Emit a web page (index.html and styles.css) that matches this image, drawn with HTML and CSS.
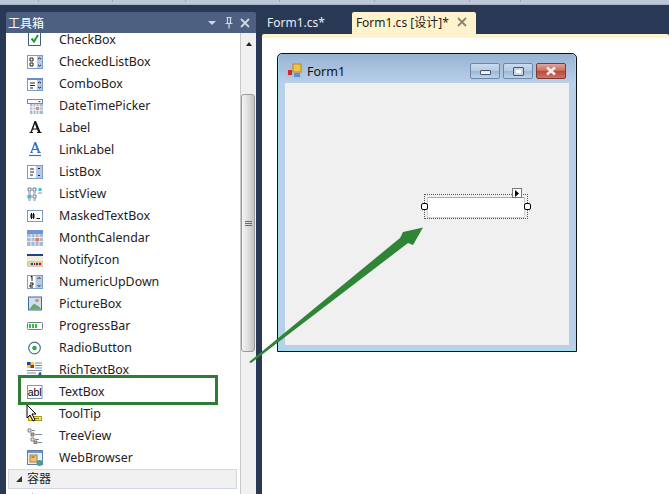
FILE: index.html
```html
<!DOCTYPE html>
<html lang="zh">
<head>
<meta charset="utf-8">
<title>Form1</title>
<link rel="stylesheet" href="styles.css">
</head>
<body>
<div class="topstrip"></div>
<div class="workspace">
  <aside class="toolbox">
    <header class="tb-title">
      <span class="tb-name">工具箱</span>
      <span class="tb-actions">
        <svg width="12" height="12" viewBox="0 0 12 12"><path d="M1 4h8L5 8z" fill="#cfd7e4"/></svg>
        <svg width="12" height="14" viewBox="0 0 12 14"><path d="M3.500 1.500h5M4.500 1.500v6M7.500 1.500v6M2.500 7.500h7M6 7.500v5" fill="none" stroke="#cfd7e4" stroke-width="1.200"/></svg>
        <svg width="12" height="12" viewBox="0 0 12 12"><path d="M2 2l8 8M10 2l-8 8" stroke="#cfd7e4" stroke-width="1.800"/></svg>
      </span>
    </header>
    <div class="tb-body">
      <div class="tb-list">
        <div class="row first"><svg class="ico" viewBox="0 0 16 16"><path d="M1.500 1v12.500h12V1" fill="#fff" stroke="#3b5f80"/><path d="M4.500 6.500l2.500 3L11 3" fill="none" stroke="#1f9a2c" stroke-width="2"/></svg><span>CheckBox</span></div>
        <div class="row"><svg class="ico" viewBox="0 0 16 16"><rect x=".5" y="1.500" width="15" height="13" fill="#fff" stroke="#7f9cc4"/><rect x="10" y="2" width="5" height="12" fill="#b5c9e6"/><path d="M3 4h3v3H3zM3 9h3v3H3z" fill="none" stroke="#222"/><path d="M11 5l1.500-1L14 5M11 11l1.500 1 1.500-1" fill="none" stroke="#222"/></svg><span>CheckedListBox</span></div>
        <div class="row"><svg class="ico" viewBox="0 0 16 16"><rect x=".5" y="2.500" width="15" height="12" fill="#fff" stroke="#7f9cc4"/><rect x="0" y="2" width="16" height="2" fill="#6b8dbd"/><rect x="10" y="4" width="5" height="10" fill="#b5c9e6"/><path d="M3 7h5M3 9.500h5M3 12h3" stroke="#222"/><path d="M11 7l1.500-1L14 7M11 11l1.500 1 1.500-1" fill="none" stroke="#222"/></svg><span>ComboBox</span></div>
        <div class="row"><svg class="ico" viewBox="0 0 16 16"><rect x=".5" y="1.500" width="15" height="4" fill="#fff" stroke="#6b8dbd"/><path d="M11 3h3l-1.500 1.500z" fill="#34588c"/><rect x="3" y="6" width="13" height="10" fill="#a9b9d2"/><path d="M6 6v10M9 6v10M12 6v10M3 9h13M3 12h13" stroke="#fff"/><rect x="9" y="9" width="3" height="3" fill="#e98a6c"/></svg><span>DateTimePicker</span></div>
        <div class="row"><svg class="ico" viewBox="0 0 16 16"><path d="M2.500 13h3.500v-1l-1 0 .8-2.500h4.400l.8 2.500-1 0v1h4.500v-1h-1L9 1H7.500L3.500 12h-1zM6.300 8.500L8 3.800 9.500 8.500z" fill="#111" fill-rule="evenodd"/></svg><span>Label</span></div>
        <div class="row"><svg class="ico" viewBox="0 0 16 16"><path d="M3 11h3v-.8l-1 0 .8-2.300h4.400l.8 2.300-1 0v.8h4v-.8h-1L9 0H7.500L3.700 10.200H3zM6.200 7L8 2.500 9.500 7z" fill="#2f74c0" fill-rule="evenodd"/><path d="M2 13.500h12" stroke="#2f74c0" stroke-width="1.200"/></svg><span>LinkLabel</span></div>
        <div class="row"><svg class="ico" viewBox="0 0 16 16"><rect x=".5" y="1.500" width="15" height="13" fill="#fff" stroke="#7f9cc4"/><rect x="9" y="2" width="6" height="12" fill="#b5c9e6"/><path d="M3 5h4M3 8h4M3 11h3" stroke="#222"/><path d="M11 5l1-1 1 1M11 11l1 1 1-1" fill="none" stroke="#222"/></svg><span>ListBox</span></div>
        <div class="row"><svg class="ico" viewBox="0 0 16 16"><path d="M1 2h3v3H1zM6 2h3v3H6zM1 9h3v3H1zM6 9h3v3H6z" fill="#fff" stroke="#47617f" stroke-width=".8"/><circle cx="13" cy="3.500" r="1.700" fill="#27c4cd"/><circle cx="2.500" cy="10.500" r="1.200" fill="#27c4cd"/><path d="M1 7h3M6 7h3M11 7h4M1 14h3M6 14h3" stroke="#7f8fa6"/></svg><span>ListView</span></div>
        <div class="row"><svg class="ico" viewBox="0 0 16 16"><rect x=".5" y="2.500" width="15" height="11" fill="#fff" stroke="#7f9cc4"/><path d="M4.500 5v6M6.500 5v6M3 7h5M3 9h5" stroke="#111"/><path d="M9.500 10.500h3.500" stroke="#111"/></svg><span>MaskedTextBox</span></div>
        <div class="row"><svg class="ico" viewBox="0 0 16 16"><rect x="0" y="0" width="16" height="16" fill="#a9b9d2"/><rect x="0" y="0" width="16" height="4" fill="#6f96d2"/><path d="M4 4v12M8 4v12M12 4v12M0 7.500h16M0 11.500h16" stroke="#e8edf5"/><rect x="8.500" y="8" width="3.500" height="3.500" fill="#e77a55"/></svg><span>MonthCalendar</span></div>
        <div class="row"><svg class="ico" viewBox="0 0 16 16"><rect x="0" y="2" width="16" height="2" fill="#1f3f8f"/><rect x="0" y="4" width="16" height="5" fill="#f0ecd8"/><rect x="0" y="9" width="16" height="6" fill="#d6cfae"/><path d="M4 11h2v2H4zM9 11h2v2H9z" fill="#1f3f8f"/><path d="M7 11h1v2H7zM12 11h2v2h-2z" fill="#c03"/></svg><span>NotifyIcon</span></div>
        <div class="row"><svg class="ico" viewBox="0 0 16 16"><rect x=".5" y="1.500" width="15" height="13" fill="#fff" stroke="#7f9cc4"/><rect x="8.500" y="2" width="6.500" height="12" fill="#b5c9e6"/><path d="M3.500 3l1.500-1v5M3 9h3v2H3v2h3" fill="none" stroke="#111"/><path d="M10.500 5l1.500-1.500L13.500 5M10.500 11l1.500 1.500 1.500-1.500" fill="none" stroke="#222"/></svg><span>NumericUpDown</span></div>
        <div class="row"><svg class="ico" viewBox="0 0 16 16"><rect x="1.500" y="1" width="13" height="13" fill="#cfe0f2" stroke="#3e6d9c"/><path d="M2 13.500l5-6 3 2 2 1 2.500 3z" fill="#6ea56a"/><circle cx="10" cy="4.500" r="1.800" fill="#e58a5a"/></svg><span>PictureBox</span></div>
        <div class="row"><svg class="ico" viewBox="0 0 16 16"><rect x=".5" y="4.500" width="15" height="7" rx="1" fill="#fff" stroke="#6e7d8c"/><path d="M2 6h2v4H2zM5 6h2v4H5zM8 6h2v4H8z" fill="#36c23a"/></svg><span>ProgressBar</span></div>
        <div class="row"><svg class="ico" viewBox="0 0 16 16"><circle cx="7.500" cy="8" r="5.800" fill="#fff" stroke="#4f7394" stroke-width="1.200"/><circle cx="7.500" cy="8" r="2.300" fill="#30a84c"/></svg><span>RadioButton</span></div>
        <div class="row"><svg class="ico" viewBox="0 0 16 16"><rect x="0" y="0" width="7" height="6" fill="#f0d020"/><rect x="0" y="0" width="3.500" height="3" fill="#1d36b8"/><rect x="3.500" y="3" width="3.500" height="3" fill="#c42020"/><path d="M8 1h7M8 3.500h7M8 6h7M0 8.500h15M0 11h9M0 13.500h7" stroke="#7c8ca6"/><path d="M10 15l2.500-5h1.500l1 5h-1.200l-.3-1.500h-1.500l-.8 1.500z" fill="#2f62b0"/></svg><span>RichTextBox</span></div>
        <div class="row"><svg class="ico" viewBox="0 0 16 16"><rect x=".5" y="1.500" width="14.500" height="13" fill="#fff" stroke="#7d98ba"/><text class="abl" x="7.700" y="11.500" text-anchor="middle">abl</text></svg><span>TextBox</span></div>
        <div class="row"><svg class="ico" viewBox="0 0 16 16"><rect x="1.500" y="10.500" width="13" height="4" fill="#f7ea3c" stroke="#a89a14"/><path d="M4 12.500h8" stroke="#8a7b10"/></svg><span>ToolTip</span></div>
        <div class="row"><svg class="ico" viewBox="0 0 16 16"><path d="M1 1h3v3H1zM4 10h3v3H4z" fill="#eef" stroke="#59667a" stroke-width=".8"/><path d="M4 5h3v3H4zM7 13h3v3H7z" fill="#e3a53a" stroke="#59667a" stroke-width=".8"/><path d="M5 2.500h3M8 6.500h7M8 11.500h4M11 14.500h4" stroke="#7b8797" fill="none"/></svg><span>TreeView</span></div>
        <div class="row"><svg class="ico" viewBox="0 0 16 16"><rect x=".5" y=".5" width="15" height="14" fill="#e8eef6" stroke="#5f7fa8"/><rect x="1" y="1" width="14" height="2" fill="#6e94c8"/><rect x="3" y="5" width="7" height="7" fill="#edc27c" stroke="#b47d2e"/><path d="M4.500 7h3" stroke="#7a4f18"/><circle cx="12.500" cy="13" r="3" fill="#3c9ab2"/><path d="M11 12l2-1 1 2-2 2z" fill="#56ae4c"/></svg><span>WebBrowser</span></div>
        <div class="group"><svg class="tri" width="8" height="8" viewBox="0 0 8 8"><path d="M7 1v6H1z" fill="#333"/></svg><span>容器</span></div>
        <div class="row next"><svg class="ico" viewBox="0 0 16 16"><path d="M5 0v14l3-3 3 5 2-1-3-5h4z" fill="#777"/></svg></div>
      </div>
      <div class="scrollbar">
        <div class="sb-btn"><svg width="8" height="6" viewBox="0 0 8 6"><path d="M4 1l3 4H1z" fill="#222"/></svg></div>
        <div class="sb-track"><div class="sb-thumb"><i></i><i></i><i></i></div></div>
      </div>
    </div>
  </aside>
  <main class="editor">
    <nav class="tabs">
      <span class="tab">Form1.cs*</span>
      <span class="tab active">Form1.cs [设计]*<svg width="10" height="10" viewBox="0 0 10 10"><path d="M1 1l8 8M9 1l-8 8" stroke="#8a8672" stroke-width="1.800"/></svg></span>
    </nav>
    <div class="tab-rule"></div>
    <div class="canvas">
      <section class="form">
        <div class="form-title">
          <svg class="form-ico" width="16" height="16" viewBox="0 0 16 16"><rect x="0" y="0" width="15" height="15" fill="#b0bccb" opacity=".45"/><rect x="1" y="7" width="4" height="5" fill="#d02a20"/><rect x="6" y="1" width="8" height="8" fill="#f2c445" stroke="#b78a1c"/><rect x="7" y="10" width="6" height="4" fill="#5b8fd6"/></svg>
          <span class="form-name">Form1</span>
          <span class="ctl">
            <span class="btn"><i class="min"></i></span>
            <span class="btn"><i class="max"></i></span>
            <span class="btn close"><svg width="12" height="10" viewBox="0 0 12 10"><path d="M2 1.500l8 7M10 1.500l-8 7" stroke="#f4ecec" stroke-width="2.600"/></svg></span>
          </span>
        </div>
        <div class="form-client">
          <div class="selection">
            <div class="textbox"></div>
            <i class="grip gl"></i><i class="grip gr"></i>
            <span class="smart"><svg width="6" height="7" viewBox="0 0 6 7"><path d="M1 0v7l4-3.500z" fill="#000"/></svg></span>
          </div>
        </div>
      </section>
    </div>
  </main>
</div>
<div class="callout"></div>
<svg class="pointer" width="16" height="20" viewBox="0 0 16 20"><path d="M1 1v13l3-3 3 6 2-1-3-6h4z" fill="#fff" stroke="#000"/></svg>
<svg class="arrow" width="669" height="494" viewBox="0 0 669 494"><path d="M249 362L400 238 403 232 423 227.500 413 245 408 243 251 363z" fill="#2f8435"/></svg>
</body>
</html>
```
FILE: styles.css
```css
* { box-sizing: border-box; }
html, body { margin: 0; padding: 0; }
body {
  width: 669px; height: 494px; overflow: hidden; position: relative;
  background: #293955;
  font-family: "Liberation Sans", "Noto Sans CJK SC", sans-serif;
  font-size: 12px; color: #1e1e1e;
}
.topstrip {
  height: 5px; border-bottom: 1px solid #a9b5c9;
  background:
    linear-gradient(#98a6bb, #98a6bb) 38px 0 / 1px 2px no-repeat,
    linear-gradient(#98a6bb, #98a6bb) 112px 0 / 1px 2px no-repeat,
    linear-gradient(#98a6bb, #98a6bb) 185px 0 / 1px 2px no-repeat,
    linear-gradient(#98a6bb, #98a6bb) 279px 0 / 1px 2px no-repeat,
    linear-gradient(#98a6bb, #98a6bb) 374px 0 / 1px 2px no-repeat,
    linear-gradient(#98a6bb, #98a6bb) 469px 0 / 1px 2px no-repeat,
    linear-gradient(#98a6bb, #98a6bb) 520px 0 / 1px 2px no-repeat,
    #bcc7d8;
}
.workspace { display: flex; height: 489px; padding-top: 7px; padding-left: 6px; }

.toolbox { width: 250px; display: flex; flex-direction: column; flex: none; }
.tb-title {
  height: 21px; background: #4d6082; color: #fff; border-radius: 2px 2px 0 0;
  display: flex; align-items: center; justify-content: space-between;
  padding: 0 5px 0 2px;
}
.tb-name { font-size: 12px; font-family: "Noto Sans CJK SC", sans-serif; }
.tb-actions { display: flex; align-items: center; gap: 4px; }
.tb-body { flex: 1; display: flex; min-height: 0; background: #fff; }
.tb-list { width: 234px; background: #fff; }
.row { height: 22px; display: flex; align-items: center; padding-left: 21px; gap: 16px; font-family: "Noto Sans", sans-serif; font-size: 12.400px; color: #222; line-height: 1; }
.row.first { height: 18px; padding-bottom: 4px; }
.row.next { margin-top: 1px; }
.ico { width: 16px; height: 16px; flex: none; }
.abl { font-family: "Liberation Sans", sans-serif; font-size: 10.500px; fill: #000; }
.group {
  height: 20px; margin: 0 3px 0 2px; display: flex; align-items: center; gap: 4px; padding: 0 0 2px 6px;
  background: #f0f0f0; border: 1px solid #d1d8e4; line-height: 1;
  font-family: "Noto Sans CJK SC", sans-serif; font-size: 12px;
}
.tri { margin-top: 2px; }
.scrollbar { width: 16px; background: #f0f0f0; border-left: 1px solid #c9c9c9; display: flex; flex-direction: column; }
.sb-btn { height: 17px; display: flex; align-items: center; justify-content: center; padding-top: 4px; }
.sb-track { flex: 1; padding-top: 44px; }
.sb-thumb {
  height: 258px; border: 1px solid #9b9b9b; border-radius: 3px; margin: 0 1px 0 0;
  background: linear-gradient(to right, #f5f5f5, #dcdcdc 55%, #c2c2c2);
  display: flex; flex-direction: column; align-items: center; justify-content: center; gap: 1px;
}
.sb-thumb i { display: block; width: 7px; height: 1px; background: #6a6a6a; }

.editor { flex: 1; min-width: 0; margin-left: 2px; display: flex; flex-direction: column; }
.tabs { height: 22px; display: flex; align-items: stretch; padding-left: 4px; gap: 22px; font-family: "Noto Sans", "Noto Sans CJK SC", sans-serif; }
.tab { display: flex; align-items: center; padding: 0 5px 2px; color: #e8ecf3; font-size: 12px; }
.tab.active { background: #fff3cd; color: #222; border-radius: 2px 2px 0 0; gap: 8px; width: 124px; padding: 0 4px 2px; }
.tab-rule { height: 4px; background: #fff3cd; margin-left: 4px; border-radius: 2px 2px 0 0; }
.canvas { flex: 1; background: #fff; margin-left: 4px; padding: 15px 0 0 15px; }
.form {
  width: 300px; height: 299px; border: 1px solid #111; border-radius: 5px 5px 0 0;
  background: #b8d0e9; display: flex; flex-direction: column; padding: 0 7px 6px 7px;
  box-shadow: inset 0 0 0 1px #9fdcec;
}
.form-title {
  height: 29px; flex: none; margin: 0 -6px; padding: 5px 9px 0 8px;
  background: linear-gradient(#98b3d2, #b8d0e9);
  border-radius: 4px 4px 0 0;
  display: flex; align-items: center; font-family: "Noto Sans", sans-serif; font-size: 12.500px; color: #111;
}
.form-ico { flex: none; margin-right: 4px; }
.form-name { flex: 1; }
.ctl { display: flex; gap: 3px; }
.btn {
  width: 30px; height: 16px; display: flex; align-items: center; justify-content: center;
  border: 1px solid #6b87a8; border-radius: 2px;
  background: linear-gradient(#cadcee 0, #b4cbe3 48%, #9db7d4 52%, #bdd3ea 100%);
}
.btn.close { background: linear-gradient(#dfa69b 0, #cc6b5c 48%, #b64b3c 52%, #cf7466 100%); border-color: #7d3a34; }
.btn .min { display: block; width: 11px; height: 5px; background: linear-gradient(#d9e3ef, #fff); border: 1px solid #47566a; border-radius: 1px; margin-top: 3px; }
.btn .max { display: block; width: 11px; height: 9px; background: #fff; border: 1px solid #47566a; border-radius: 1px; position: relative; box-shadow: inset 0 0 0 2px #c6d6e8; }
.form-client { flex: 1; background: #f0f0f0; padding: 111px 0 0 139px; }
.selection {
  width: 104px; height: 25px; position: relative;
  border: 1px dotted #555;
  padding: 1px 1px;
}
.textbox { height: 100%; margin: 1px; background: #fff; border: 1px solid #d0d0d0; border-top-color: #ababab; border-radius: 1px; }
.grip { position: absolute; width: 7px; height: 7px; background: #fff; border: 1px solid #000; border-radius: 2px; top: 8px; }
.gl { left: -4px; }
.gr { right: -4px; }
.smart { position: absolute; right: 5px; top: -7px; width: 10px; height: 10px; background: #fff; border: 1px solid #777; display: flex; align-items: center; justify-content: center; }

.callout { position: absolute; left: 18px; top: 375px; width: 200px; height: 30px; border: 3px solid #2d7d32; }
.pointer { position: absolute; left: 26px; top: 404px; }
.arrow { position: absolute; left: 0; top: 0; pointer-events: none; }
```
